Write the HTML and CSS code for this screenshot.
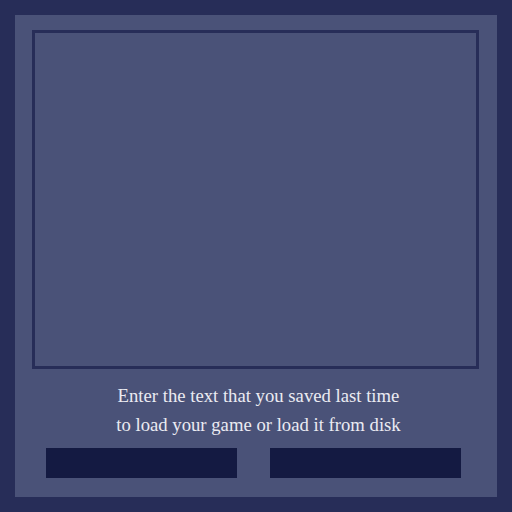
FILE: index.html
```html
<!DOCTYPE html>
<html>
<head>
<meta charset="utf-8">
<link rel="stylesheet" href="styles.css">
</head>
<body>
<div class="panel">
  <div class="screen"></div>
  <div class="message">
    <p>Enter the text that you saved last time</p>
    <p>to load your game or load it from disk</p>
  </div>
  <div class="buttons">
    <div class="btn"></div>
    <div class="btn"></div>
  </div>
</div>
</body>
</html>
```
FILE: styles.css
```css
html, body {
  margin: 0;
  padding: 0;
  background: #272d58;
  width: 512px;
  height: 512px;
  overflow: hidden;
}
.panel {
  margin: 15px;
  width: 482px;
  height: 482px;
  background: #4a5278;
  box-sizing: border-box;
  padding: 15px 0 0 17px;
  display: flex;
  flex-direction: column;
}
.screen {
  width: 447px;
  height: 339px;
  box-sizing: border-box;
  border: 3px solid #272d58;
}
.message {
  width: 447px;
  text-align: center;
  font-family: "Liberation Serif", "DejaVu Serif", serif;
  font-size: 18.7px;
  color: #ebebf2;
  padding: 12px 0 0 6px;
  height: 79px;
  box-sizing: border-box;
}
.message p {
  margin: 0;
  line-height: 29px;
}
.buttons {
  display: flex;
  gap: 33px;
  padding-left: 14px;
}
.btn {
  width: 191px;
  height: 30px;
  background: #141a42;
}
```
